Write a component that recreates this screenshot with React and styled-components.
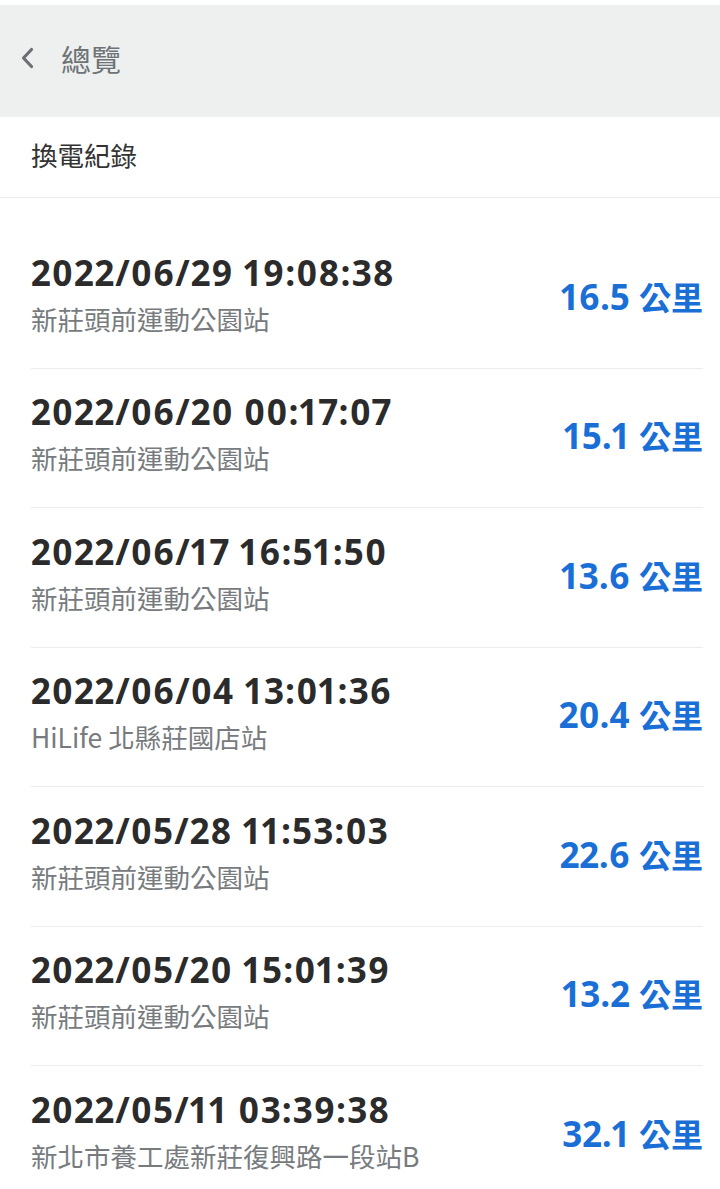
import React from "react";
import styled, { createGlobalStyle } from "styled-components";

const records = [
  { time: "2022/06/29 19:08:38", station: "新莊頭前運動公園站", km: "16.5" },
  { time: "2022/06/20 00:17:07", station: "新莊頭前運動公園站", km: "15.1" },
  { time: "2022/06/17 16:51:50", station: "新莊頭前運動公園站", km: "13.6" },
  { time: "2022/06/04 13:01:36", station: "HiLife 北縣莊國店站", km: "20.4" },
  { time: "2022/05/28 11:53:03", station: "新莊頭前運動公園站", km: "22.6" },
  { time: "2022/05/20 15:01:39", station: "新莊頭前運動公園站", km: "13.2" },
  { time: "2022/05/11 03:39:38", station: "新北市養工處新莊復興路一段站B", km: "32.1" },
];

export default function App() {
  return (
    <>
      <GlobalStyle />
      <Page>
        <Header>
          <BackButton aria-label="back">
            <svg width="16" height="24" viewBox="0 0 16 24" fill="none">
              <path d="M12.5 3.5 L4.5 12 L12.5 20.5" stroke="#6b7074" strokeWidth="3.2" strokeLinecap="round" strokeLinejoin="round" />
            </svg>
          </BackButton>
          <HeaderTitle>總覽</HeaderTitle>
        </Header>
        <Section>換電紀錄</Section>
        <List>
          {records.map((r) => (
            <Row key={r.time}>
              <Info>
                <Time>{r.time}</Time>
                <Station>{r.station}</Station>
              </Info>
              <Distance>
                {r.km} <Unit>公里</Unit>
              </Distance>
            </Row>
          ))}
        </List>
      </Page>
    </>
  );
}

const GlobalStyle = createGlobalStyle`
  html, body {
    margin: 0;
    padding: 0;
    background: #fff;
  }
  body {
    font-family: "Noto Sans", "Noto Sans CJK TC", sans-serif;
  }
`;

const Page = styled.div`
  padding-top: 5px;
  background: #fff;
  min-height: 1189px;
  box-sizing: border-box;
`;

const Header = styled.div`
  height: 112px;
  box-sizing: border-box;
  padding: 0 0 6px 19px;
  background: #eef0f0;
  display: flex;
  align-items: center;
  gap: 26px;
`;

const BackButton = styled.div`
  display: flex;
  align-items: center;
  width: 16px;
  height: 24px;
`;

const HeaderTitle = styled.div`
  font-family: "Noto Sans CJK TC", sans-serif;
  font-size: 30px;
  color: #6e7377;
`;

const Section = styled.div`
  height: 81px;
  box-sizing: border-box;
  padding: 0 0 6px 31px;
  display: flex;
  align-items: center;
  font-family: "Noto Sans CJK TC", sans-serif;
  font-size: 26.5px;
  color: #333;
  border-bottom: 1px solid #ebebeb;
`;

const List = styled.div`
  padding: 31px 17px 0 31px;
`;

const Row = styled.div`
  display: flex;
  align-items: center;
  justify-content: space-between;
  height: 139.5px;
  box-sizing: border-box;
  padding-bottom: 7px;
  border-bottom: 1px solid #ececec;
`;

const Info = styled.div`
  display: flex;
  flex-direction: column;
  gap: 8px;
`;

const Time = styled.div`
  font-family: "Open Sans", sans-serif;
  font-weight: 700;
  font-size: 35px;
  line-height: 40px;
  color: #2b2b2b;
  letter-spacing: 1.1px;
  font-variant-numeric: proportional-nums;
`;

const Station = styled.div`
  font-family: "Noto Sans CJK TC", sans-serif;
  font-size: 26.5px;
  line-height: 36px;
  color: #777b7e;
`;

const Distance = styled.div`
  font-family: "Open Sans", sans-serif;
  font-weight: 700;
  font-size: 35px;
  letter-spacing: 0;
  color: #1a6fd6;
  white-space: nowrap;
  padding-top: 3px;
  font-variant-numeric: proportional-nums;
`;

const Unit = styled.span`
  font-family: "Noto Sans CJK TC", sans-serif;
  font-size: 32px;
`;
